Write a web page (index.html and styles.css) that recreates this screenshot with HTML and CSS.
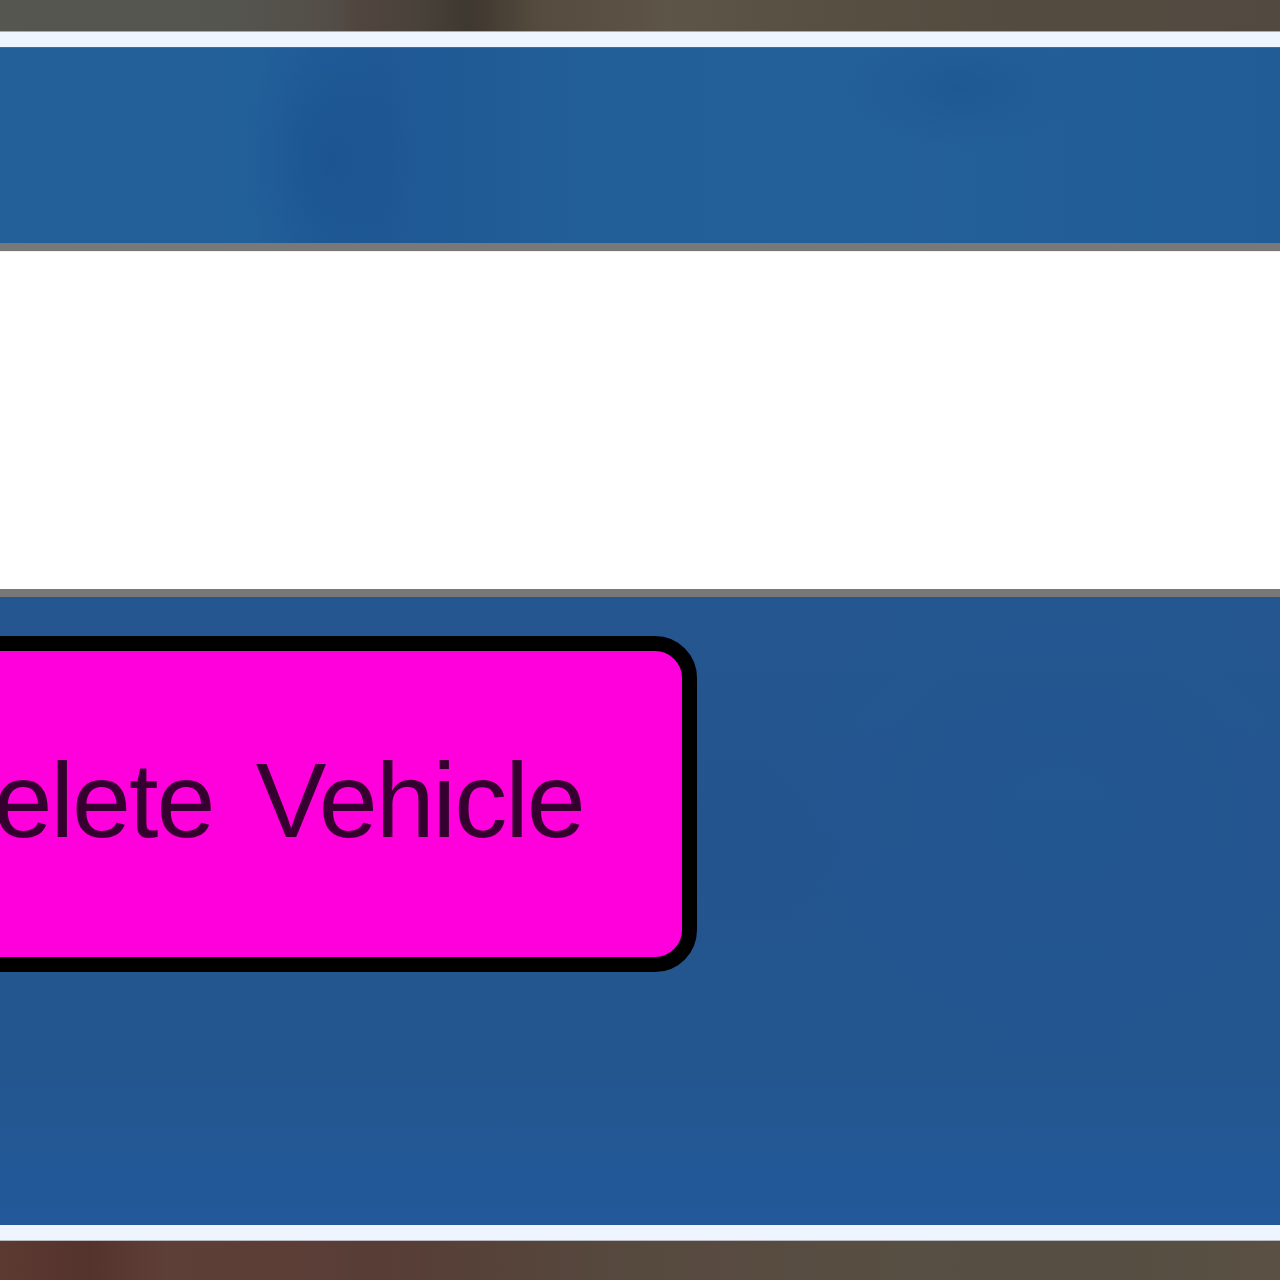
FILE: index.html
```html
<!DOCTYPE html>
<html>
<head>
<meta charset="utf-8">
<title>Delete Vehicle</title>
<link rel="stylesheet" href="styles.css">
</head>
<body>
  <div class="desk desk-top"></div>
  <div class="strip strip-top"></div>
  <div class="panel panel-top"></div>
  <div class="rule"></div>
  <div class="content"></div>
  <div class="rule"></div>
  <div class="panel panel-bottom">
    <button class="btn-delete" type="button">Delete Vehicle</button>
  </div>
  <div class="strip strip-bottom"></div>
  <div class="desk desk-bottom"></div>
</body>
</html>
```

FILE: styles.css
```css
html, body {
  margin: 0;
  padding: 0;
  width: 1280px;
  height: 1280px;
  overflow: hidden;
  background: #eef5fe;
}

body {
  display: flex;
  flex-direction: column;
}

.desk {
  flex: none;
}

.desk-top {
  height: 31px;
  background: linear-gradient(90deg,
    #565650 0%, #55554f 18%, #534d47 26%, #51453f 28%,
    #48413a 33%, #3d3830 36.5%, #443c33 38%, #554b3e 42%,
    #5a5044 48%, #5d5547 52%, #585042 62%, #544b40 80%, #524a40 100%);
}

.desk-bottom {
  height: 40px;
  border-top: 1px solid #b8bcc2;
  box-sizing: border-box;
  flex: 1;
  background: linear-gradient(90deg,
    #5c3a32 0%, #55332d 7%, #5e3f38 13%, #5d3e37 20%, #573d36 30%,
    #56433a 40%, #564a3f 50%, #584a40 55%, #574f42 70%, #564e42 85%, #5a5044 100%);
}

.strip {
  flex: none;
  background: #eef5fe;
}

.strip-top {
  height: 16px;
  border-top: 1px solid #a9aaa6;
  box-sizing: border-box;
}

.strip-bottom {
  height: 15px;
}

.panel {
  flex: none;
}

.panel-top {
  height: 196px;
  border-top: 1px solid #3a6ea4;
  box-sizing: border-box;
  background:
    radial-gradient(ellipse 90px 140px at 330px 110px, rgba(24, 78, 140, 0.55), rgba(24, 78, 140, 0) 100%),
    radial-gradient(ellipse 120px 60px at 960px 40px, rgba(26, 82, 144, 0.4), rgba(26, 82, 144, 0) 100%),
    linear-gradient(90deg, #235f99 0%, #22609a 20%, #1f5894 30%, #225e98 45%, #235f98 70%, #215c97 100%);
}

.rule {
  flex: none;
  height: 8px;
  background: #787878;
}

.content {
  flex: none;
  height: 338px;
  background: #ffffff;
  border-top: 1px solid #f0f0f0;
  box-sizing: border-box;
}

.panel-bottom {
  flex: none;
  height: 628px;
  box-sizing: border-box;
  padding-top: 39px;
  background:
    radial-gradient(ellipse 300px 260px at 1060px 820px, rgba(33, 88, 148, 0.6), rgba(33, 88, 148, 0) 100%),
    linear-gradient(180deg, #24568f 0%, #24548e 40%, #23568f 75%, #22599a 100%);
  background-position: 0 -597px, 0 0;
  background-size: 1280px 1280px, 100% 100%;
  background-repeat: no-repeat;
  background-color: #24558f;
}

.btn-delete {
  display: flex;
  align-items: center;
  box-sizing: border-box;
  width: 817px;
  height: 336px;
  margin: 0 0 0 -120px;
  padding: 0 0 8px 24px;
  border: 15px solid #000000;
  border-radius: 42px;
  background: #ff00dd;
  color: #35002f;
  font-family: "Liberation Sans", Arial, sans-serif;
  font-size: 106px;
  line-height: 1;
  letter-spacing: -2px;
  word-spacing: 15px;
  white-space: nowrap;
  cursor: default;
}
```
